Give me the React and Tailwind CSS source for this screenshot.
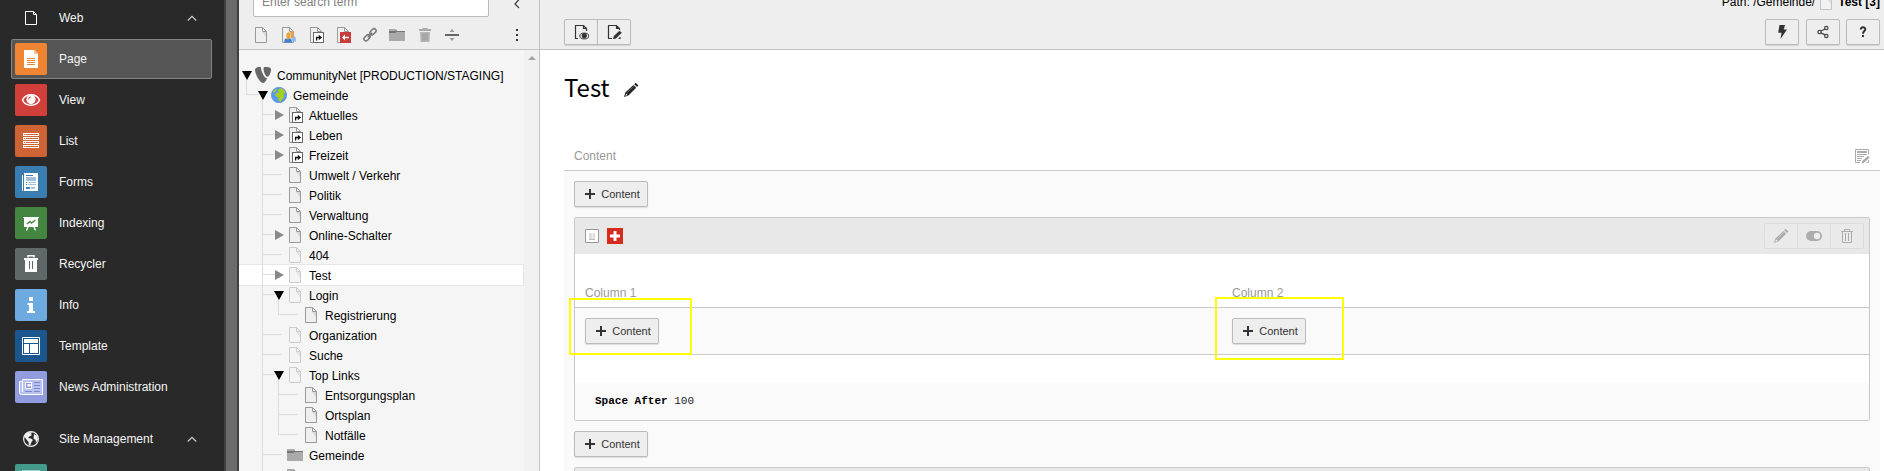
import React from "react";

/* ---------- shared icons ---------- */

function PageIcon({ stroke = "#999", fill = "#efefef", fold = "#d9d9d9", children }) {
  return (
    <svg width="16" height="16" viewBox="0 0 16 16" className="block shrink-0">
      <path d="M2.500 .5h7l4 4v11h-11z" fill={fill} stroke={stroke} />
      <path d="M9 5h4v5z" fill={fold} />
      <path d="M9.500 .5v4h4z" fill="#fff" stroke={stroke} />
      {children}
    </svg>
  );
}

const ShortcutBadge = () => (
  <>
    <rect x="5.500" y="5.500" width="10" height="10" fill="#fff" stroke="#666" />
    <path d="M8.600 13.500v-3H11" fill="none" stroke="#111" strokeWidth="1.300" />
    <path d="M10.800 7.800l3.200 2.700-3.200 2.700z" fill="#111" />
  </>
);

const FolderIcon = () => (
  <svg width="16" height="16" viewBox="0 0 16 16" className="block shrink-0">
    <path d="M0 2h7l1 2h8v10H0z" fill="#aaa" />
    <path d="M0 4h7l1-1.500V4h8v1H7.500L6.500 6H0z" fill="#757575" />
  </svg>
);

const Pencil = ({ size = 16, color = "#222" }) => (
  <svg width={size} height={size} viewBox="0 0 16 16" className="block shrink-0">
    <path d="M11.200 2.200L12.600.8 15.400 3.600 14 5z" fill={color} />
    <path d="M10.400 3L13.200 5.800 5.400 13.600 1 15l1.400-4.400z" fill={color} />
    <path d="M3 11.600L4.500 13 2.500 13.800z" fill="#fff" />
    <path d="M4.500 10.500l6-6" stroke="#fff" strokeOpacity=".35" strokeWidth=".8" />
  </svg>
);

const Chevron = () => (
  <svg width="16" height="16" viewBox="0 0 16 16" className="block">
    <path d="M3.800 10.500L8 6.300l4.200 4.200" fill="none" stroke="#ccc" strokeWidth="1.200" />
  </svg>
);

const TrashIcon = ({ color = "#999" }) => (
  <svg width="16" height="16" viewBox="0 0 16 16" className="block" fill="none" stroke={color}>
    <path d="M2 3.500h12M5.500 3V1.500h5V3M3.500 4v10.500h9V4M6.500 5v8M9.500 5v8" />
  </svg>
);

/* ---------- module menu ---------- */

const glyphs = {
  page: (
    <>
      <path d="M9 7h10l4 4v14H9z" fill="#fff" />
      <path d="M19 7l4 4h-4z" fill="#f8c79c" />
      <path d="M12 15.500h8M12 17.500h8M12 19.500h8M12 21.500h8" stroke="#ef8533" />
    </>
  ),
  view: (
    <>
      <path d="M7.500 16c3-7 14-7 17 0-3 7-14 7-17 0z" fill="none" stroke="#fff" strokeWidth="1.500" />
      <circle cx="16" cy="15.500" r="4.600" fill="#fff" />
      <path d="M13.500 15.500a2.500 2.500 0 0 1 2.500-2.500" fill="none" stroke="#d13f3b" />
    </>
  ),
  list: (
    <>
      <path d="M8 8h16v15H8z" fill="#fff" />
      <path d="M9 9.500h1M11 9.500h12M9 13.500h1M11 13.500h12M9 17.500h1M11 17.500h12M9 21.500h1M11 21.500h12M8 11.500h16M8 15.500h16M8 19.500h16" stroke="#ce6435" />
    </>
  ),
  forms: (
    <>
      <path d="M7 9h1v16H7zM9 7h14v18H9z" fill="#fff" />
      <path d="M11 9.500h7M11 16.500h1M11 18.500h1M11 22h4" stroke="#3a7db1" />
      <path d="M11 11h10v4H11zM16 21h4v2h-4z" fill="#a3c2de" />
      <path d="M13 16.500h8M13 18.500h8" stroke="#a3c2de" />
      <path d="M11 21h4v2h-4z" fill="#3a7db1" />
    </>
  ),
  indexing: (
    <>
      <path d="M8 10h16v1h-1v9H9v-9H8z" fill="#fff" />
      <path d="M12 17l3-2.500 1.500 1.500 4-3" fill="none" stroke="#448542" strokeWidth="1.400" />
      <path d="M13 20l-1.500 3.500M19 20l1.500 3.500" stroke="#fff" strokeWidth="1.300" />
    </>
  ),
  recycler: (
    <>
      <path d="M13 9.500V7.700h6v1.800" fill="none" stroke="#fff" strokeWidth="1.500" />
      <path d="M9 10h14v2h-1v12H10V12H9z" fill="#fff" />
      <path d="M14.500 13v8M17.500 13v8" stroke="#606768" />
    </>
  ),
  info: <path d="M14 8h4v4h-4zM12.500 14H18v8h2v2h-8v-2h2v-6h-1.500z" fill="#fff" />,
  template: (
    <>
      <path d="M7.500 7.500h17v17h-17z" fill="none" stroke="#fff" />
      <path d="M9 9h14v4H9zM9 14h5v9H9zM15 14h8v9h-8z" fill="#fff" />
    </>
  ),
  news: (
    <>
      <path d="M7.500 8.500h20v15H6.500a2 2 0 0 1-2-2v-11h3z" fill="#b9c1f0" stroke="#fff" />
      <path d="M7.500 9v12" stroke="#fff" />
      <path d="M10.500 11.500h6v6h-6z" fill="#8d9adf" stroke="#fff" />
      <path d="M12.500 13h3v2.500h-3z" fill="#fff" />
      <path d="M19 11.500h6M19 14.500h6M19 17.500h6M10 20.500h7M19 20.500h6" stroke="#7d87cf" />
    </>
  ),
  site: <path d="M7 6.500h18V25H7z" fill="#fff" />,
};

const modules = [
  { key: "page", label: "Page", bg: "bg-[#ef8533]", active: true },
  { key: "view", label: "View", bg: "bg-[#d13f3b]" },
  { key: "list", label: "List", bg: "bg-[#ce6435]" },
  { key: "forms", label: "Forms", bg: "bg-[#3a7db1]" },
  { key: "indexing", label: "Indexing", bg: "bg-[#448542]" },
  { key: "recycler", label: "Recycler", bg: "bg-[#606768]" },
  { key: "info", label: "Info", bg: "bg-[#6daae0]" },
  { key: "template", label: "Template", bg: "bg-[#1b568f]" },
  { key: "news", label: "News Administration", bg: "bg-[#929de0]" },
];

function MenuItem({ glyph, label, bg, active }) {
  return (
    <div
      className={
        "flex h-10 w-[201px] shrink-0 items-center gap-3 rounded-[2px] border pl-[3px] text-[#f5f5f5] " +
        (active ? "border-[#828282] bg-[#555]" : "border-transparent")
      }
    >
      <span className={"block size-8 shrink-0 rounded-[2px] " + bg}>
        <svg width="32" height="32" viewBox="0 0 32 32">{glyphs[glyph]}</svg>
      </span>
      <span>{label}</span>
    </div>
  );
}

function MenuHeader({ icon, label }) {
  return (
    <div className="flex h-10 w-[201px] shrink-0 items-center pl-3 pr-3 text-[#f5f5f5]">
      <span className="mr-4 block">{icon}</span>
      <span className="ml-1 grow">{label}</span>
      <Chevron />
    </div>
  );
}

function Sidebar() {
  return (
    <nav className="flex h-full w-[224px] shrink-0 flex-col overflow-hidden bg-[#292929] pl-[11px]">
      <div className="-mt-0.5 mb-px">
        <MenuHeader
          label="Web"
          icon={
            <svg width="16" height="16" viewBox="0 0 16 16" fill="none" stroke="#fff">
              <path d="M2.500 1.500h8l3 3v10h-11z M10.500 1.500v3h3" />
            </svg>
          }
        />
      </div>
      <div className="flex flex-col gap-px">
        {modules.map((m) => (
          <MenuItem key={m.key} glyph={m.key} label={m.label} bg={m.bg} active={m.active} />
        ))}
      </div>
      <div className="mt-3 mb-px">
        <MenuHeader
          label="Site Management"
          icon={
            <svg width="16" height="16" viewBox="0 0 16 16">
              <circle cx="8" cy="8" r="7.400" fill="none" stroke="#eee" strokeWidth="1.200" />
              <path d="M2 3.500L5 1.500l4-.5-1 2 1 1-2.500 1.500L5 7l3 .5L10 9l-1.500 2L7.500 14 6 14.500 5.500 11 3.500 8.500 1.500 6zM11 3l3 1.500 1 4-2 3.500-.5-3-2-1.500.2-2z" fill="#eee" />
            </svg>
          }
        />
      </div>
      <MenuItem glyph="site" label="" bg="bg-[#429b8c]" />
    </nav>
  );
}

/* ---------- page tree ---------- */

const nodes = [
  { level: 0, label: "CommunityNet [PRODUCTION/STAGING]", icon: "typo3", toggle: "open" },
  { level: 1, label: "Gemeinde", icon: "globe", toggle: "open", last: true },
  { level: 2, label: "Aktuelles", icon: "shortcut", toggle: "closed" },
  { level: 2, label: "Leben", icon: "shortcut", toggle: "closed" },
  { level: 2, label: "Freizeit", icon: "shortcut", toggle: "closed" },
  { level: 2, label: "Umwelt / Verkehr", icon: "page" },
  { level: 2, label: "Politik", icon: "page" },
  { level: 2, label: "Verwaltung", icon: "page" },
  { level: 2, label: "Online-Schalter", icon: "page", toggle: "closed" },
  { level: 2, label: "404", icon: "hidden" },
  { level: 2, label: "Test", icon: "hidden", toggle: "closed", selected: true },
  { level: 2, label: "Login", icon: "hidden", toggle: "open" },
  { level: 3, label: "Registrierung", icon: "page", last: true },
  { level: 2, label: "Organization", icon: "hidden" },
  { level: 2, label: "Suche", icon: "hidden" },
  { level: 2, label: "Top Links", icon: "hidden", toggle: "open" },
  { level: 3, label: "Entsorgungsplan", icon: "page" },
  { level: 3, label: "Ortsplan", icon: "page" },
  { level: 3, label: "Notfälle", icon: "page", last: true },
  { level: 2, label: "Gemeinde", icon: "folder" },
  { level: 2, label: "", icon: "folder" },
];

function NodeIcon({ type }) {
  if (type === "typo3")
    return (
      <svg width="16" height="16" viewBox="0 0 16 16" className="block shrink-0" fill="#666">
        <path d="M12.200 11c-.3.100-.5.100-.8.100-2.300 0-5.500-7.800-5.500-10.300 0-1 .2-1.300.6-1.500C3.600-.4 0 .7 0 2.800 0 6.900 4.800 16 8 16c1.400 0 3-2 4.200-5" />
        <path d="M10 0c3.500 0 6 .6 6 2.500C16 6 13.800 9.800 12.500 9.800 10.500 9.800 8.500 4.500 8.500 1.800 8.500.5 9 0 10 0" />
      </svg>
    );
  if (type === "globe")
    return (
      <svg width="16" height="16" viewBox="0 0 16 16" className="block shrink-0">
        <circle cx="8" cy="8" r="7.700" fill="#5b98ee" stroke="#4a86dc" strokeWidth=".6" />
        <path d="M9.500 1l3 1.500L14.500 5 12.500 8l1 2-2 2-2 3-2-1.500V10.500L5 9.500 4 7.500l2.500-2L8 5.500 7 3z" fill="#a4d01c" />
        <path d="M2 5L4.500 2l1.500.5L3.500 6z" fill="#a4d01c" />
      </svg>
    );
  if (type === "folder") return <FolderIcon />;
  if (type === "hidden") return <PageIcon stroke="#ccc" fill="#f4f4f4" fold="#e4e4e4" />;
  if (type === "shortcut")
    return (
      <PageIcon>
        <ShortcutBadge />
      </PageIcon>
    );
  return <PageIcon />;
}

function Guides({ level, toggle, last }) {
  const width = 16 * (level + 1);
  const own = 16 * level - 8.5;
  const end = toggle ? own + 12 : own + 19;
  const c = 16 * level + 7.5;
  return (
    <svg width={width} height="20" viewBox={`0 0 ${width} 20`} className="block shrink-0">
      <g stroke="#ddd" fill="none">
        {level === 3 && <path d="M23.500 0v20" />}
        {level > 0 && <path d={`M${own} 0V${last ? 10 : 20}M${own} 9.500H${end}`} />}
        {toggle === "open" && <path d={`M${c} 12V20`} />}
      </g>
      {toggle === "open" && <path d={`M${c - 4.5} 6h10l-5 9z`} fill="#000" />}
      {toggle === "closed" && <path d={`M${c - 3.5} 5v10l9-5z`} fill="#888" />}
    </svg>
  );
}

function TreeRow({ node }) {
  return (
    <div
      className={
        "flex h-5 w-[285px] shrink-0 items-center whitespace-nowrap text-black " +
        (node.selected ? "bg-white shadow-[inset_-1px_0_#e7e7e7,0_-1px_#e7e7e7,0_1px_#e7e7e7]" : "")
      }
    >
      <Guides level={node.level} toggle={node.toggle} last={node.last} />
      <NodeIcon type={node.icon} />
      <span className="ml-1.5 mt-px">{node.label}</span>
    </div>
  );
}

function TreePanel() {
  return (
    <section className="flex h-full w-[301px] shrink-0 flex-col border-r border-[#c3c3c3] bg-[#f5f5f5]">
      <div className="flex h-[50px] shrink-0 flex-col border-b border-[#c3c3c3] bg-[#eee]">
        <div className="flex h-[17px] items-end">
          <div className="ml-[14px] flex h-[30px] w-[236px] items-center rounded-[2px] border border-[#bbb] bg-white pb-px pl-2 text-[#808080]">
            Enter search term
          </div>
          <svg width="16" height="16" viewBox="0 0 16 16" className="mb-[5px] ml-[18px]">
            <path d="M12 3.500L8 8l4 4" fill="none" stroke="#444" strokeWidth="1.300" />
          </svg>
        </div>
        <div className="flex h-8 items-center pl-[14px] pt-[4px]">
          <div className="flex gap-[11.300px]">
            <PageIcon />
            <PageIcon>
              <path d="M11 4h2.500v4l2 2.500.5 4h-4z" fill="#8ab8ee" />
              <path d="M6.500 6.500L8.500 5l1.500 1.500V12H6.500zM10.500 4.500L12 3.500l1.500 1V11h-3z" fill="#e8a33d" />
              <path d="M4 15.500l1-4 3 .8 3-.8 1.200 4z" fill="#3f7fd4" />
            </PageIcon>
            <PageIcon>
              <ShortcutBadge />
            </PageIcon>
            <PageIcon>
              <path d="M5 5h11v11H5z" fill="#c83c3c" />
              <path d="M7 10.500l3-3v2.200h4v1.600h-4v2.200z" fill="#fff" />
            </PageIcon>
            <svg width="16" height="16" viewBox="0 0 16 16" fill="none" stroke="#777" strokeWidth="1.500">
              <rect x="-3.500" y="-2" width="7" height="4" rx="2" transform="translate(11 4.800) rotate(-45)" />
              <rect x="-3.500" y="-2" width="7" height="4" rx="2" transform="translate(5 10.800) rotate(-45)" />
              <path d="M5.800 10.200l4.400-4.400" />
            </svg>
            <FolderIcon />
            <svg width="16" height="16" viewBox="0 0 16 16">
              <path d="M2 2h3.500V1h5v1H14v2H2z" fill="#aaa" />
              <path d="M3 5h10l-.5 10h-9z" fill="#b5b5b5" />
              <path d="M6 6.500v7M8 6.500v7M10 6.500v7" stroke="#999" />
            </svg>
            <svg width="16" height="16" viewBox="0 0 16 16">
              <path d="M1 7h14v2H1z" fill="#666" />
              <path d="M5.500 5L8 2l2.500 3zM5.500 11L8 14l2.500-3z" fill="#999" />
            </svg>
          </div>
          <svg width="4" height="14" viewBox="0 0 4 14" className="ml-[55px] fill-[#333]">
            <path d="M1 1h2v2H1zM1 6h2v2H1zM1 11h2v2H1z" />
          </svg>
        </div>
      </div>
      <div className="flex min-h-0 grow">
        <div className="flex w-[285px] flex-col overflow-hidden pt-[15px]">
          {nodes.map((n, i) => (
            <TreeRow key={i} node={n} />
          ))}
        </div>
        <div className="w-[15px] bg-[#f1f1f1] pl-1 pt-1.5">
          <svg width="8" height="4" viewBox="0 0 8 4" className="block fill-[#a3a3a3]">
            <path d="M0 4L4 0l4 4z" />
          </svg>
        </div>
      </div>
    </section>
  );
}

/* ---------- content ---------- */

function ToolButton({ className = "", children }) {
  return (
    <button
      className={
        "flex h-[26px] shrink-0 items-center justify-center rounded-[2px] border border-[#bbb] bg-[#eee] shadow-[0_1px_1px_rgba(0,0,0,0.12)] " +
        className
      }
    >
      {children}
    </button>
  );
}

function AddContent() {
  return (
    <ToolButton className="w-[74px] text-[11px] text-[#333]">
      <svg width="10" height="10" viewBox="0 0 10 10" className="ml-[3px] mr-1.5 block shrink-0 fill-[#333]">
        <path d="M4 0h2v4h4v2H6v4H4V6H0V4h4z" />
      </svg>
      Content
    </ToolButton>
  );
}

function DocHeader() {
  return (
    <header className="flex h-[50px] shrink-0 flex-col border-b border-[#c3c3c3] bg-[#eee] pl-6 pr-1">
      <div className="flex h-[19px] shrink-0 items-start justify-end text-black">
        <span className="-mt-[7px] flex items-start leading-[18px]">
          Path: /Gemeinde/
          <span className="ml-[3px] mr-1 mt-px block">
            <PageIcon stroke="#c4c4c4" fill="#f2f2f2" fold="#ddd" />
          </span>
          <b>Test [3]</b>
        </span>
      </div>
      <div className="flex items-center">
        <ToolButton className="w-[34px] rounded-r-none">
          <svg width="16" height="16" viewBox="0 0 16 16" fill="none" stroke="#333">
            <path d="M5 14.500H2.500v-13h8l3 3V7M10.500 1.500v3h3" strokeWidth="1.200" />
            <ellipse cx="11.300" cy="12" rx="4.500" ry="2.900" />
            <circle cx="11.300" cy="11.800" r="2.200" fill="#333" />
          </svg>
        </ToolButton>
        <ToolButton className="-ml-px w-[34px] rounded-l-none">
          <svg width="16" height="16" viewBox="0 0 16 16" fill="none" stroke="#333">
            <path d="M6 14.500H2.500v-13h8l3 3V6M10.500 1.500v3h3M12.500 14.500h1.500V13" strokeWidth="1.200" />
            <path d="M7 15.300l.8-3.200 5.700-5.300 2.300 2-5.800 5.600z" fill="#333" stroke="none" />
          </svg>
        </ToolButton>
        <div className="grow" />
        <ToolButton className="mr-[7px] w-[34px]">
          <svg width="16" height="16" viewBox="0 0 16 16" fill="#333">
            <path d="M5.500 1h5.500L9.700 5.500H13L6.500 15l1-6.200H4.200z" />
          </svg>
        </ToolButton>
        <ToolButton className="mr-1.5 w-[34px]">
          <svg width="16" height="16" viewBox="0 0 16 16" fill="none" stroke="#444" strokeWidth="1.200">
            <path d="M6 7l4-2M6 8.900l4 2" />
            <circle cx="4.500" cy="8" r="1.700" />
            <circle cx="11.300" cy="4" r="1.700" />
            <circle cx="11.300" cy="12" r="1.700" />
          </svg>
        </ToolButton>
        <ToolButton className="w-[34px]">
          <svg width="16" height="16" viewBox="0 0 16 16" fill="none" stroke="#333" strokeWidth="2">
            <path d="M5.800 5.500C5.800 2.500 10.300 2.500 10.300 5.200 10.300 7 8 7.200 8 9.800M8 11v2" />
          </svg>
        </ToolButton>
      </div>
    </header>
  );
}

function Column({ title }) {
  return (
    <div className="flex w-1/2 flex-col">
      <div className="flex h-[53px] items-end pb-1.5 pl-2.5 leading-[16px] text-[#999]">{title}</div>
      <div className="h-12 border-y border-[#c9c9c9] bg-[#fafafa] pl-2.5 pt-2.5">
        <AddContent />
      </div>
    </div>
  );
}

function ContentElement() {
  return (
    <article className="my-2.5 flex h-[204px] shrink-0 flex-col rounded-[2px] border border-[#c9c9c9] bg-white">
      <div className="flex h-9 shrink-0 items-center bg-[#e8e8e8] pl-2.5 pr-[5px]">
        <svg width="14" height="14" viewBox="0 0 14 14" className="mr-2 block">
          <path d="M.5 .5h13v13H.5z" fill="#fff" stroke="#999" />
          <path d="M4 4h3v7H4zM7.500 4h2.500v7H7.500z" fill="#ddd" />
          <path d="M4 10.500h6" stroke="#bbb" />
        </svg>
        <svg width="16" height="16" viewBox="0 0 16 16" className="block">
          <path d="M0 0h16v16H0z" fill="#d82a1d" />
          <path d="M6.500 3h3v3.500H13v3H9.500V13h-3V9.500H3v-3h3.500z" fill="#fff" />
        </svg>
        <div className="grow" />
        <div className="flex h-[26px] w-[100px] divide-x divide-[#dcdcdc] rounded-[2px] border border-[#dcdcdc] bg-[#eaeaea]">
          <span className="flex flex-1 items-center justify-center">
            <Pencil color="#adadad" />
          </span>
          <span className="flex flex-1 items-center justify-center">
            <svg width="16" height="16" viewBox="0 0 16 16">
              <rect x="0" y="3" width="16" height="10" rx="5" fill="#adadad" />
              <circle cx="11" cy="8" r="3.200" fill="#eee" />
            </svg>
          </span>
          <span className="flex flex-1 items-center justify-center">
            <TrashIcon color="#adadad" />
          </span>
        </div>
      </div>
      <div className="flex shrink-0">
        <Column title="Column 1" />
        <Column title="Column 2" />
      </div>
      <div className="mt-7 grow bg-[#fafafa] pl-5 pt-[10px] font-['Liberation_Mono',monospace] text-[11px] leading-[16px] text-[#222]">
        <b className="text-black">Space After</b> 100
      </div>
    </article>
  );
}

function Content() {
  return (
    <main className="flex h-full min-w-0 grow flex-col overflow-hidden bg-white">
      <DocHeader />
      <div className="flex min-h-0 grow flex-col pl-6 pr-1">
        <div className="flex h-[88px] shrink-0 items-start gap-[13px] pt-[19px] text-black">
          <h1 className="font-['Noto_Sans_CJK_SC','Noto_Sans',sans-serif] text-[24px] leading-[36px]">Test</h1>
          <span className="mt-[13px]">
            <Pencil />
          </span>
        </div>
        <div className="flex h-[33px] shrink-0 items-start justify-between border-b border-[#c9c9c9] pl-2.5 pr-2.5 text-[#999]">
          <span className="mt-[10px] leading-[16px]">Content</span>
          <svg width="16" height="16" viewBox="0 0 16 16" className="mt-[10px] block" fill="none" stroke="#aaa">
            <path d="M6 14.500H1.500v-13h13v5M14.500 12v2.500h-2" />
            <path d="M3 4h10" strokeWidth="2" />
            <path d="M3 6.500h10M3 8.500h7M3 10.500h5M3 12.500h4" />
            <path d="M7.500 15.500l.7-2.500 5.800-5 1.700 1.500-5.700 5.300z" fill="#aaa" stroke="none" />
          </svg>
        </div>
        <div className="flex min-h-0 grow flex-col bg-[#fafafa] px-2.5 pt-2.5">
          <AddContent />
          <ContentElement />
          <AddContent />
          <div className="mt-2.5 h-[37px] shrink-0 rounded-t-[2px] border border-[#c9c9c9] bg-[#e8e8e8]" />
        </div>
      </div>
    </main>
  );
}

export default function App() {
  return (
    <div className="relative flex h-[471px] w-[1884px] overflow-hidden font-['Liberation_Sans',Arial,sans-serif] text-[12px] leading-[18px]">
      <Sidebar />
      <div className="h-full w-[15px] shrink-0 border-x-2 border-[#404040] bg-[#6b6b6b]" />
      <TreePanel />
      <Content />
      {/* highlight markers */}
      <div className="pointer-events-none absolute left-[569px] top-[298px] h-[57px] w-[123px] border-2 border-[#ffff00]" />
      <div className="pointer-events-none absolute left-[1215px] top-[297px] h-[63px] w-[129px] border-2 border-[#ffff00]" />
    </div>
  );
}
